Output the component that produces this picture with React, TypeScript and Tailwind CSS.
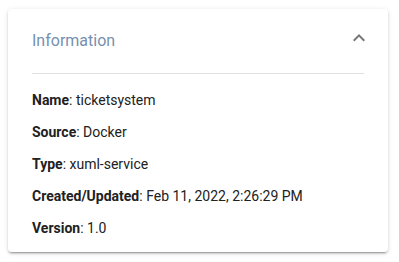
const rows: [string, string][] = [
  ['Name', 'ticketsystem'],
  ['Source', 'Docker'],
  ['Type', 'xuml-service'],
  ['Created/Updated', 'Feb 11, 2022, 2:26:29 PM'],
  ['Version', '1.0'],
];

export default function App() {
  return (
    <div className="min-h-screen bg-white px-2 pt-[9px] font-['Roboto',sans-serif]">
      <div className="w-[380px] h-[243px] rounded bg-white shadow-[0_3px_1px_-2px_rgba(0,0,0,0.2),0_2px_2px_0_rgba(0,0,0,0.14),0_1px_5px_0_rgba(0,0,0,0.12)]">
        <div className="flex items-start justify-between pl-6 pr-[17px] pt-5 pb-5">
          <h2 className="text-base leading-6 text-[#7690ae]">Information</h2>
          <svg viewBox="0 0 24 24" className="w-6 h-6 -mt-[3px] fill-[#757575]">
            <path d="M12 8l-6 6 1.41 1.41L12 10.83l4.59 4.58L18 14z" />
          </svg>
        </div>
        <div className="mx-6 h-px bg-[#e0e0e0]" />
        <div className="flex flex-col gap-3 px-6 pt-4">
          {rows.map(([k, v]) => (
            <div key={k} className="text-sm leading-5 text-[#212121]">
              <span className="font-bold">{k}</span>: {v}
            </div>
          ))}
        </div>
      </div>
    </div>
  );
}
